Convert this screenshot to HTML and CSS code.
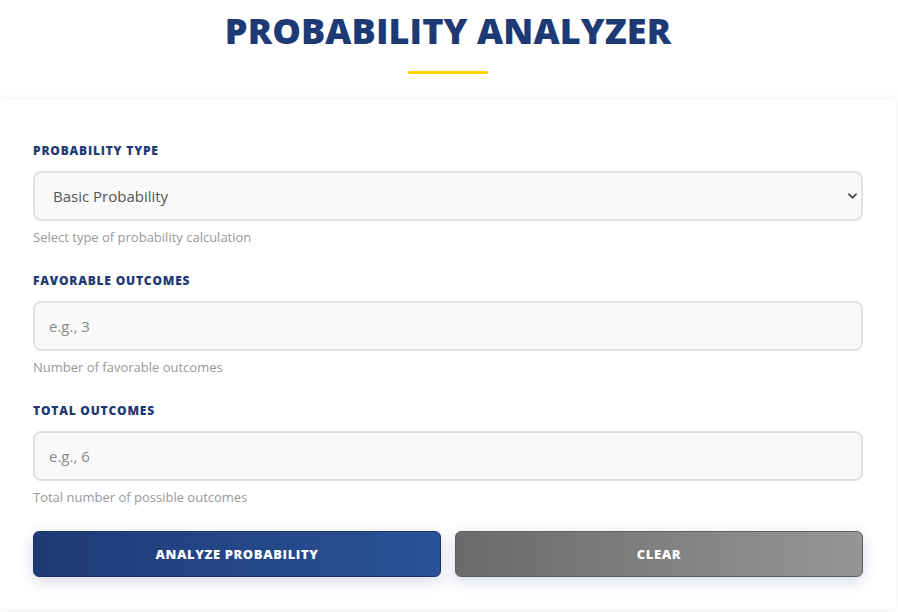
FILE: index.html
```html
<!DOCTYPE html>
<html lang="en">
<head>
<meta charset="utf-8">
<title>Probability Analyzer</title>
<link rel="stylesheet" href="styles.css">
</head>
<body>
<header class="hero">
  <h1 class="title">PROBABILITY ANALYZER</h1>
  <div class="underline"></div>
</header>
<main class="card">
  <div class="field">
    <label class="label" for="ptype">PROBABILITY TYPE</label>
    <div class="select-wrap">
      <select id="ptype" class="control select">
        <option>Basic Probability</option>
      </select>
      <svg class="chev" viewBox="0 0 10 6" width="10" height="6"><path d="M1 1l4 4 4-4" fill="none" stroke="#333" stroke-width="1.8" stroke-linecap="round" stroke-linejoin="round"/></svg>
    </div>
    <div class="help">Select type of probability calculation</div>
  </div>
  <div class="field">
    <label class="label" for="fav">FAVORABLE OUTCOMES</label>
    <input id="fav" class="control input" type="text" placeholder="e.g., 3">
    <div class="help">Number of favorable outcomes</div>
  </div>
  <div class="field field-last">
    <label class="label" for="tot">TOTAL OUTCOMES</label>
    <input id="tot" class="control input" type="text" placeholder="e.g., 6">
    <div class="help">Total number of possible outcomes</div>
  </div>
  <div class="actions">
    <button class="btn btn-primary">ANALYZE PROBABILITY</button>
    <button class="btn btn-secondary">CLEAR</button>
  </div>
</main>
</body>
</html>
```
FILE: styles.css
```css
* { box-sizing: border-box; }
html, body { margin: 0; padding: 0; background: #ffffff; }
body {
  font-family: "Open Sans", "Noto Sans", sans-serif;
  color: #333;
  padding: 0 2px 4px 0;
}
.hero {
  display: flex;
  flex-direction: column;
  align-items: center;
  padding-top: 9px;
  height: 100px;
}
.title {
  margin: 0;
  font-size: 36px;
  font-weight: 800;
  letter-spacing: 0.1px;
  color: #1e3a75;
  line-height: 44px;
}
.underline {
  width: 80px;
  height: 3px;
  background: #ffd100;
  border-radius: 2px;
  margin-top: 18px;
}
.card {
  background: #fff;
  box-shadow: 0 -4px 18px rgba(0, 0, 0, 0.04), 0 2px 6px rgba(0,0,0,0.04);
  padding: 43px 33px 32px 33px;
  border-radius: 2px;
}
.field {
  display: flex;
  flex-direction: column;
  margin-bottom: 28px;
}
.field-last { margin-bottom: 26px; }
.label {
  font-size: 12px;
  font-weight: 800;
  letter-spacing: 0.8px;
  color: #1e3a75;
  line-height: 16px;
  margin-bottom: 12px;
}
.select-wrap { position: relative; }
.control {
  width: 100%;
  height: 50px;
  border: 2px solid #e2e2e2;
  border-radius: 8px;
  background: #f9f9f9;
  font-family: inherit;
  font-size: 15px;
  color: #555;
  padding: 0 18px;
  outline: none;
  display: block;
}
.input { padding: 0 14px; }
.control::placeholder { color: #8a8a8a; opacity: 1; }
.select {
  appearance: none;
  -webkit-appearance: none;
}
.chev {
  position: absolute;
  right: 6px;
  top: 22px;
  width: 9px;
  height: 6px;
}
.help {
  font-size: 13px;
  color: #999;
  margin-top: 8px;
  line-height: 16px;
}
.actions {
  display: grid;
  grid-template-columns: 1fr 1fr;
  gap: 14px;
}
.btn {
  height: 46px;
  border-radius: 6px;
  font-family: inherit;
  font-size: 13px;
  font-weight: 800;
  letter-spacing: 0.6px;
  color: #fff;
  cursor: pointer;
  box-shadow: 0 5px 15px rgba(30, 58, 117, 0.18);
}
.btn-primary {
  background: linear-gradient(90deg, #1e3a75 0%, #2a5298 100%);
  border: 1px solid #1b3470;
}
.btn-secondary {
  background: linear-gradient(90deg, #6a6a6a 0%, #969696 100%);
  border: 1px solid #5e5e5e;
}
```
